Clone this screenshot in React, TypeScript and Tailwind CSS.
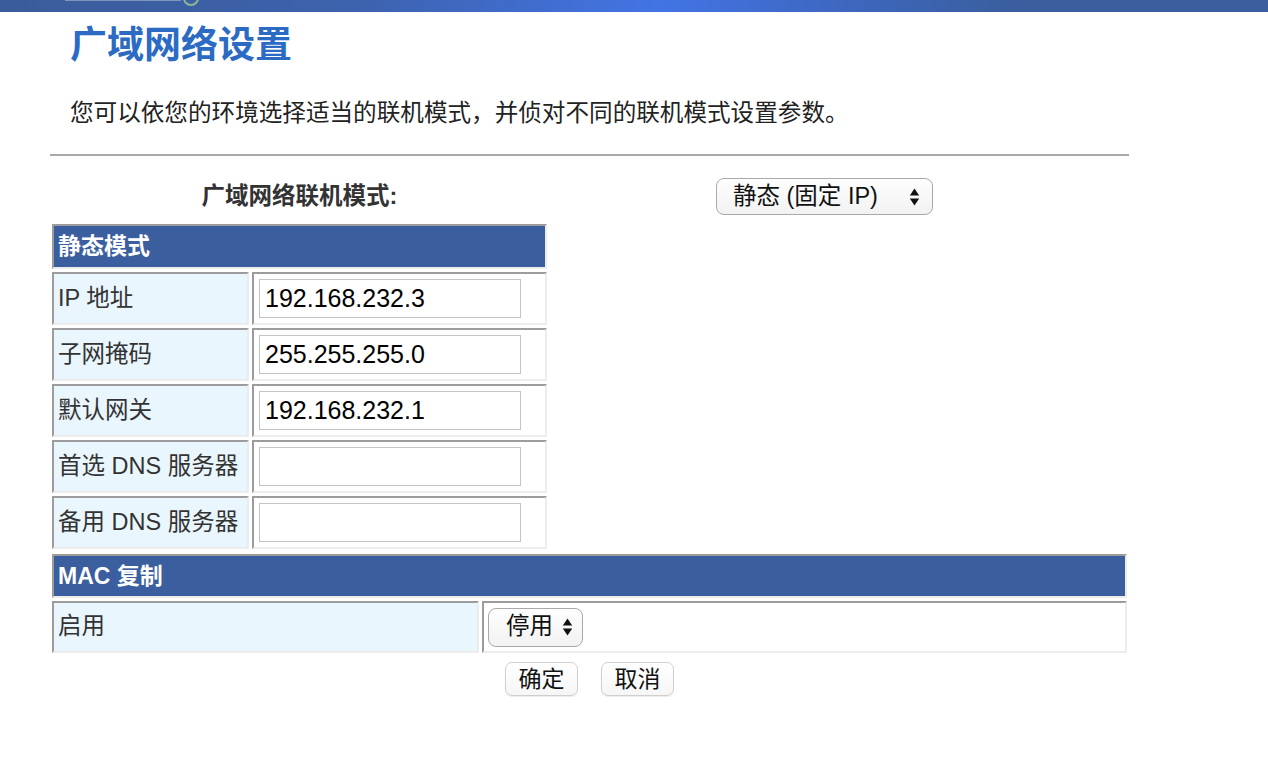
const cell =
  'border-2 border-t-[#9c9c9c] border-l-[#9c9c9c] border-r-[#ececec] border-b-[#ececec]'

const rows = [
  {label: 'IP 地址', value: '192.168.232.3'},
  {label: '子网掩码', value: '255.255.255.0'},
  {label: '默认网关', value: '192.168.232.1'},
  {label: '首选 DNS 服务器', value: ''},
  {label: '备用 DNS 服务器', value: ''},
]

function Arrows() {
  return (
    <svg width="11" height="20" viewBox="0 0 11 20" className="h-[20px] w-[11px] shrink-0">
      <path d="M5.5 1.5 L10.2 8.5 H0.8 Z" fill="#111" />
      <path d="M5.5 18.5 L10.2 11.5 H0.8 Z" fill="#111" />
    </svg>
  )
}

function FakeSelect({label, className}: {label: string; className: string}) {
  return (
    <div
      className={`flex items-center justify-between rounded-[8px] border border-[#a9a9a9] bg-[linear-gradient(#fefefe,#f2f2f2)] text-[23.5px] text-[#111] ${className}`}
    >
      <span className="leading-none">{label}</span>
      <Arrows />
    </div>
  )
}

function Btn({children}: {children: string}) {
  return (
    <button
      type="button"
      className="flex h-[34px] w-[73px] items-center justify-center rounded-[7px] border border-[#cfcfcf] bg-[linear-gradient(#ffffff,#f6f6f6)] text-[23px] leading-none text-[#111] shadow-[0_1px_1px_rgba(0,0,0,0.08)]"
    >
      {children}
    </button>
  )
}

export default function App() {
  return (
    <div className="min-h-[774px] w-[1268px] bg-white font-[family-name:'Liberation_Sans','Noto_Sans_CJK_SC',sans-serif] text-[#333]">
      {/* top strip */}
      <div className="flex h-[12px] items-start overflow-hidden bg-[linear-gradient(90deg,#3b5c9a_0%,#3d62ad_28%,#4274e4_52%,#3e69c6_64%,#3a5e9e_80%,#3a5e9e_100%)]">
        <div className="ml-[65px] h-px w-[116px] bg-[#7d95bf]" />
        <div className="-mt-[10px] ml-[2px] h-[16px] w-[16px] rounded-full border-2 border-[#8db597]" />
      </div>

      <h1 className="ml-[70px] mt-[12px] text-[37px] font-bold leading-[44px] text-[#2c6bc4]">
        广域网络设置
      </h1>
      <p className="ml-[70px] mt-[29px] text-[23.6px] leading-[32px] text-[#222]">
        您可以依您的环境选择适当的联机模式，并侦对不同的联机模式设置参数。
      </p>

      <div className="ml-[50px] w-[1079px]">
        <div className="mt-[25px] h-[2px] bg-[#a9a9a9]" />

        {/* connection mode */}
        <div className="mt-[22px] flex items-center">
          <div className="ml-[2px] w-[495px] text-center text-[23.5px] font-bold leading-none text-[#333]">
            广域网络联机模式:
          </div>
          <FakeSelect label="静态 (固定 IP)" className="ml-[169px] h-[37px] w-[217px] pl-[16px] pr-[12px]" />
        </div>

        {/* static mode table */}
        <div className="ml-[2px] mt-[9px] flex w-[495px] flex-col gap-[3px]">
          <div className={`${cell} flex h-[45px] items-center bg-[#3a5e9e] pl-[4px] text-[23px] font-bold text-white`}>
            静态模式
          </div>
          {rows.map((r) => (
            <div key={r.label} className="flex h-[53px] gap-[3px]">
              <div className={`${cell} flex w-[197px] items-center bg-[#eaf6fd] pl-[4px] text-[23.5px] whitespace-nowrap`}>
                {r.label}
              </div>
              <div className={`${cell} flex flex-1 items-center bg-white pl-[5px]`}>
                <input
                  readOnly
                  value={r.value}
                  className="h-[39px] w-[262px] border border-[#c4c4c4] bg-white px-[5px] text-[25px] text-black outline-none"
                />
              </div>
            </div>
          ))}
        </div>

        {/* MAC clone */}
        <div className="ml-[2px] mt-[5px] flex w-[1075px] flex-col gap-[3px]">
          <div className={`${cell} flex h-[44px] items-center bg-[#3a5e9e] pl-[4px] text-[23px] font-bold text-white`}>
            MAC 复制
          </div>
          <div className="flex h-[52px] gap-[3px]">
            <div className={`${cell} flex w-[427px] items-center bg-[#eaf6fd] pl-[4px] text-[23.5px]`}>
              启用
            </div>
            <div className={`${cell} flex flex-1 items-center bg-white pl-[4px]`}>
              <FakeSelect label="停用" className="h-[39px] w-[95px] pl-[17px] pr-[9px]" />
            </div>
          </div>
        </div>

        <div className="ml-[2px] mt-[9px] flex w-[1075px] justify-center gap-[23px]">
          <Btn>确定</Btn>
          <Btn>取消</Btn>
        </div>
      </div>
    </div>
  )
}
